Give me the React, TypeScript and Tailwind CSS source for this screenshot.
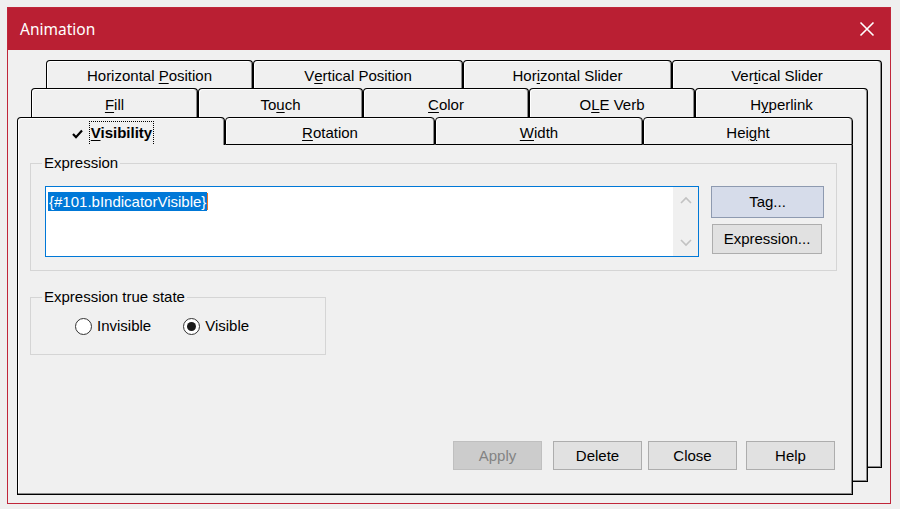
import type { ReactNode } from "react";

const font = { fontFamily: '"Liberation Sans", Arial, sans-serif' };

function Tab({ w, children, bottom = false }: { w: number; children: ReactNode; bottom?: boolean }) {
  return (
    <div
      className={
        "flex h-full flex-none items-center justify-center rounded-t-[4px] border border-black bg-[#f0f0f0] pt-[4px] text-[15px] text-black shadow-[inset_-1px_0_0_#8a8a8a,inset_1px_1px_0_#ffffff] " +
        (bottom ? "" : "border-b-0")
      }
      style={{ width: w }}
    >
      {children}
    </div>
  );
}

function U({ children }: { children: ReactNode }) {
  return <span className="underline decoration-1 underline-offset-[2px]">{children}</span>;
}

function Btn({ children, className = "" }: { children: ReactNode; className?: string }) {
  return (
    <div className={"flex h-[29px] w-[89px] items-center justify-center border border-[#adadad] bg-[#e1e1e1] pt-[1px] text-[15px] text-black " + className}>
      {children}
    </div>
  );
}

function Radio({ checked, label, className = "" }: { checked?: boolean; label: string; className?: string }) {
  return (
    <div className={"flex items-center " + className}>
      <div className="flex h-[17px] w-[17px] items-center justify-center rounded-full border border-[#333333] bg-white">
        {checked ? <div className="h-[9px] w-[9px] rounded-full bg-[#1a1a1a]" /> : null}
      </div>
      <span className="ml-[5px] text-[15px] text-black">{label}</span>
    </div>
  );
}

export default function App() {
  return (
    <div className="h-[509px] w-[900px] overflow-hidden bg-[#efefef] pl-[7px] pt-[7px]" style={font}>
      <div className="flex h-[497px] w-[884px] flex-col border border-[#c0263a] bg-[#f0f0f0]">
        {/* title bar */}
        <div className="flex h-[42px] flex-none items-center justify-between bg-[#ba1f33] pl-[12px] pr-[15px]">
          <span className="pt-[1px] text-[15.5px] text-white" style={{ fontFamily: '"Noto Sans", "Open Sans", sans-serif' }}>
            Animation
          </span>
          <svg width="16" height="16" viewBox="0 0 16 16">
            <path d="M1.5 1.5 L14.5 14.5 M14.5 1.5 L1.5 14.5" stroke="#ffffff" strokeWidth="1.6" fill="none" />
          </svg>
        </div>

        {/* property sheet */}
        <div className="relative ml-[9px] mt-[10px] w-[866px]">
          {/* back pages */}
          <div className="absolute left-[29px] top-[28px] z-[1] h-[380px] w-[836px] border-b border-r border-black bg-[#f0f0f0] shadow-[inset_-1px_-1px_0_#8a8a8a]" />
          <div className="absolute left-[14px] top-[57px] z-[2] h-[365px] w-[837px] border-b border-r border-black bg-[#f0f0f0] shadow-[inset_-1px_-1px_0_#8a8a8a]" />

          {/* row 1 */}
          <div className="relative z-[1] ml-[29px] flex h-[28px] w-[836px]">
            <Tab w={207}>
              Horizontal&nbsp;<U>P</U>osition
            </Tab>
            <Tab w={210}>
              V<U>e</U>rtical Position
            </Tab>
            <Tab w={209}>
              Hor<U>i</U>zontal Slider
            </Tab>
            <Tab w={210}>
              Ver<U>t</U>ical Slider
            </Tab>
          </div>
          {/* row 2 */}
          <div className="relative z-[2] ml-[14px] flex h-[29px] w-[837px]">
            <Tab w={167}>
              <U>F</U>ill
            </Tab>
            <Tab w={165}>
              To<U>u</U>ch
            </Tab>
            <Tab w={166}>
              <U>C</U>olor
            </Tab>
            <Tab w={166}>
              O<U>L</U>E Verb
            </Tab>
            <Tab w={173}>
              H<U>y</U>perlink
            </Tab>
          </div>
          {/* row 3 */}
          <div className="relative z-[3] flex h-[28px] w-[836px]">
            <Tab w={208}>
              <div className="flex items-center pr-[16px]">
                <svg width="11" height="10" viewBox="0 0 11 10" className="mr-[6px]">
                  <path d="M1 5 L4 8.2 L10 1.5" stroke="#000" strokeWidth="2.2" fill="none" />
                </svg>
                <span className="border border-dotted border-black px-[1px] font-bold">
                  <U>V</U>isibility
                </span>
              </div>
            </Tab>
            <Tab w={210} bottom>
              <U>R</U>otation
            </Tab>
            <Tab w={208} bottom>
              <U>W</U>idth
            </Tab>
            <Tab w={210} bottom>
              Hei<U>g</U>ht
            </Tab>
          </div>

          {/* active page */}
          <div className="relative z-[3] flex h-[350px] w-[836px] flex-col border-b border-l border-r border-black bg-[#f0f0f0] shadow-[inset_-1px_-1px_0_#8a8a8a,inset_1px_0_0_#ffffff]">
            {/* Expression group */}
            <div className="relative ml-[12px] mt-[18px] h-[108px] w-[807px] border border-[#d5d5d5] pl-[14px] pt-[22px]">
              <span className="absolute -top-[10px] left-[11px] bg-[#f0f0f0] px-[2px] text-[15px] leading-[18px] text-black">Expression</span>
              <div className="flex items-start">
                <div className="flex h-[71px] w-[654px] border border-[#0078d7] bg-white">
                  <div className="flex-1 pl-[2px] pt-[3px]">
                    <span className="bg-[#0078d7] px-[1px] py-[1px] text-[15px] text-white">{"{#101.bIndicatorVisible}"}</span>
                    <span className="inline-block h-[17px] w-[1px] translate-y-[3px] bg-[#f07020]" />
                  </div>
                  <div className="flex w-[25px] flex-col items-center justify-between bg-[#f0f0f0] py-[9px]">
                    <svg width="12" height="8" viewBox="0 0 12 8">
                      <path d="M1 7 L6 2 L11 7" stroke="#c2c2c2" strokeWidth="1.6" fill="none" />
                    </svg>
                    <svg width="12" height="8" viewBox="0 0 12 8">
                      <path d="M1 1 L6 6 L11 1" stroke="#c2c2c2" strokeWidth="1.6" fill="none" />
                    </svg>
                  </div>
                </div>
                <div className="ml-[12px] flex flex-col">
                  <div className="flex h-[32px] w-[113px] items-center justify-center border border-[#8e9ab0] bg-[#d6dcea] pt-[1px] text-[15px] text-black">
                    Tag...
                  </div>
                  <div className="ml-[1px] mt-[6px] flex h-[30px] w-[110px] items-center justify-center border border-[#adadad] bg-[#e1e1e1] pt-[1px] text-[15px] text-black">
                    Expression...
                  </div>
                </div>
              </div>
            </div>

            {/* Expression true state group */}
            <div className="relative ml-[12px] mt-[26px] flex h-[58px] w-[296px] items-center border border-[#d5d5d5] pt-[1px]">
              <span className="absolute -top-[10px] left-[11px] bg-[#f0f0f0] px-[2px] text-[15px] leading-[18px] text-black">
                Expression true state
              </span>
              <Radio label="Invisible" className="ml-[44px]" />
              <Radio checked label="Visible" className="ml-[32px]" />
            </div>

            {/* buttons */}
            <div className="mt-auto flex justify-end pb-[24px] pr-[17px]">
              <div className="flex h-[29px] w-[89px] items-center justify-center border border-[#bfbfbf] bg-[#cccccc] pt-[1px] text-[15px] text-[#838383]">
                Apply
              </div>
              <Btn className="ml-[11px]">Delete</Btn>
              <Btn className="ml-[6px]">Close</Btn>
              <Btn className="ml-[9px]">Help</Btn>
            </div>
          </div>
        </div>
      </div>
    </div>
  );
}
